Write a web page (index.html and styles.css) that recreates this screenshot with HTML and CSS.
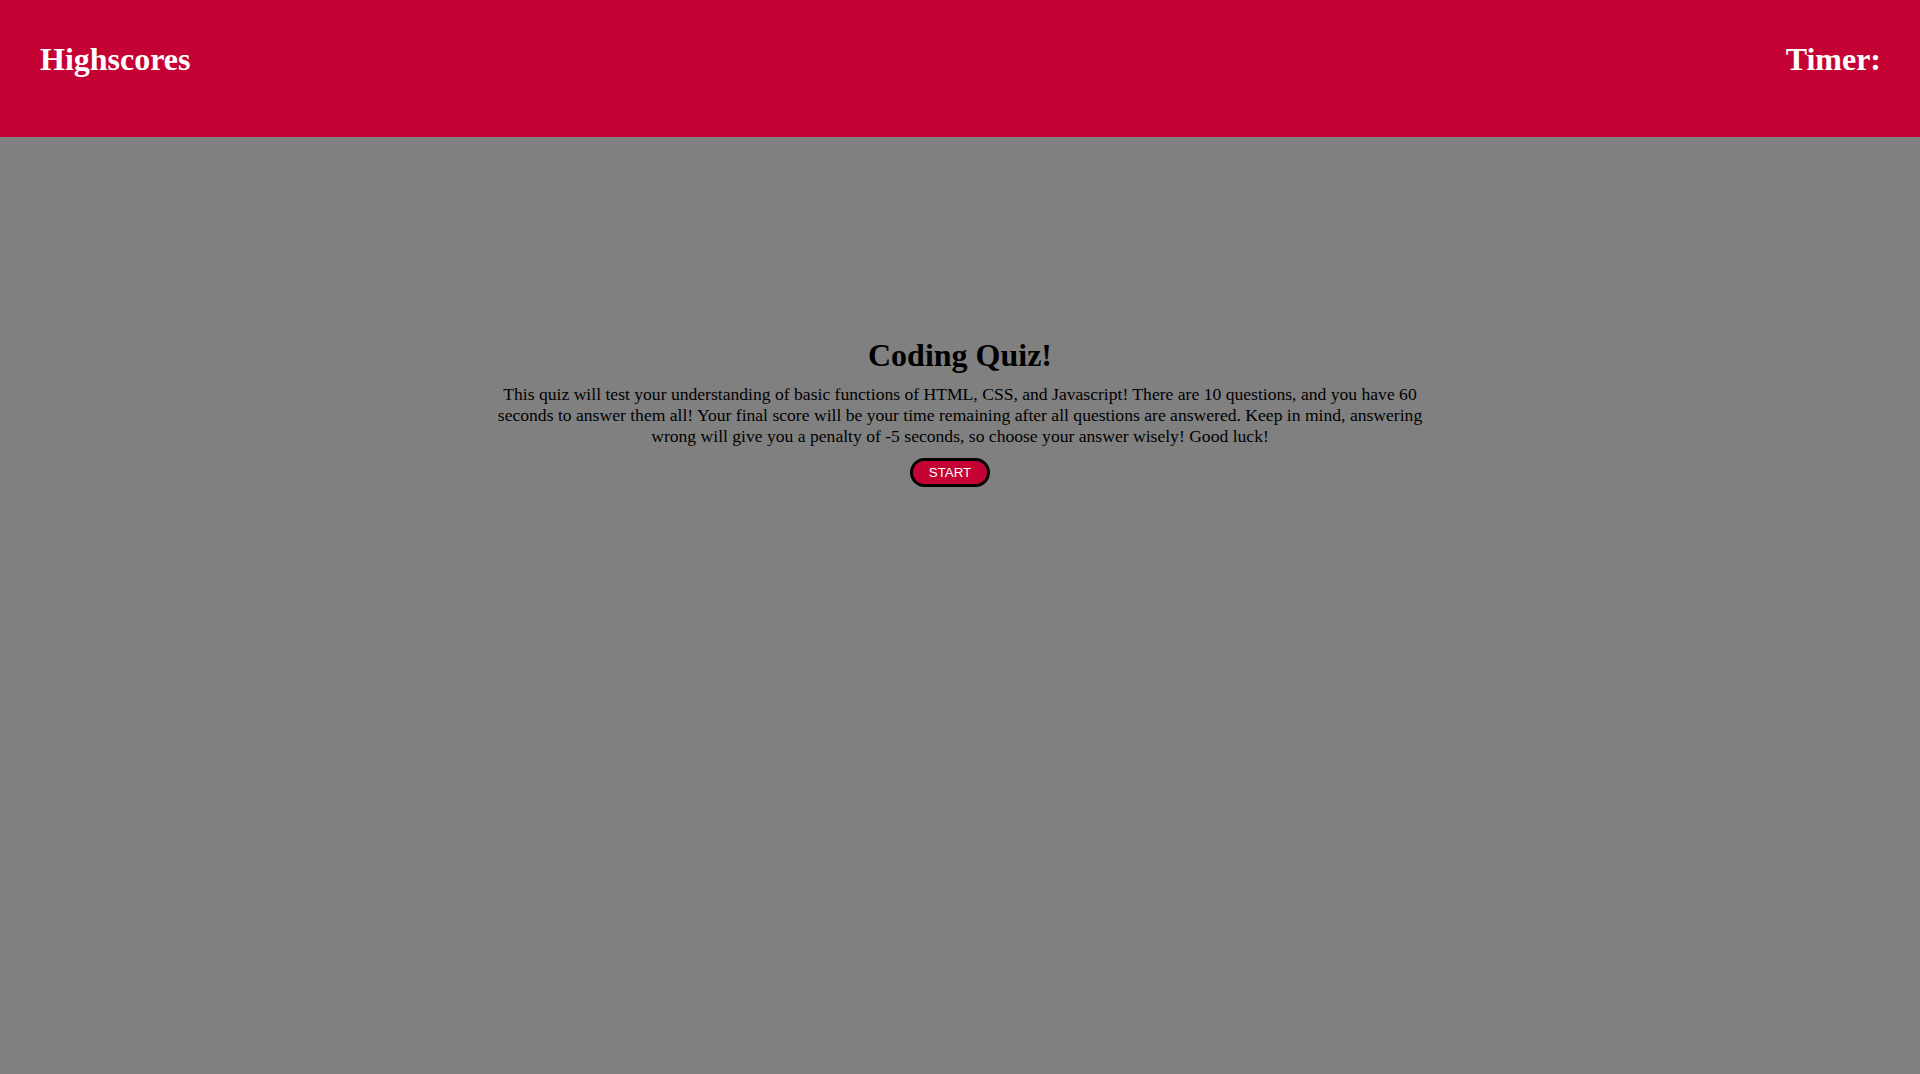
FILE: index.html
```html
<!DOCTYPE html>
<html lang="en">
<head>
<meta charset="utf-8">
<title>Coding Quiz</title>
<link rel="stylesheet" href="styles.css">
</head>
<body>
<header class="topbar">
  <h1 class="topbar-link">Highscores</h1>
  <h1 class="topbar-timer">Timer:</h1>
</header>
<main class="quiz">
  <h1 class="quiz-title">Coding Quiz!</h1>
  <p class="quiz-intro">This quiz will test your understanding of basic functions of HTML, CSS, and Javascript! There are 10 questions, and you have 60 seconds to answer them all! Your final score will be your time remaining after all questions are answered. Keep in mind, answering wrong will give you a penalty of -5 seconds, so choose your answer wisely! Good luck!</p>
  <button class="start-btn">START</button>
</main>
</body>
</html>
```
FILE: styles.css
```css
html, body {
  margin: 0;
  padding: 0;
}
body {
  background: #808080;
  font-family: "Liberation Serif", "Times New Roman", serif;
  min-height: 1074px;
}
.topbar {
  background: #c40233;
  height: 137px;
  box-sizing: border-box;
  padding: 41px 39px 0 40px;
  display: flex;
  justify-content: space-between;
  align-items: flex-start;
}
.topbar h1 {
  margin: 0;
  color: #ffffff;
  font-size: 32px;
  font-weight: bold;
}
.quiz {
  width: 960px;
  margin: 0 auto;
  padding-top: 200px;
  display: flex;
  flex-direction: column;
  align-items: center;
  text-align: center;
}
.quiz-title {
  margin: 0;
  font-size: 32px;
  color: #000;
}
.quiz-intro {
  margin: 10px 0 0 0;
  font-size: 17.6px;
  color: #000;
}
.start-btn {
  margin: 11px 20px 0 0;
  width: 80px;
  height: 29px;
  border: 3px solid #000;
  border-radius: 15px;
  background: #c40233;
  color: #fff;
  font-family: "Liberation Sans", Arial, sans-serif;
  font-size: 13.33px;
  padding: 0;
}
```
